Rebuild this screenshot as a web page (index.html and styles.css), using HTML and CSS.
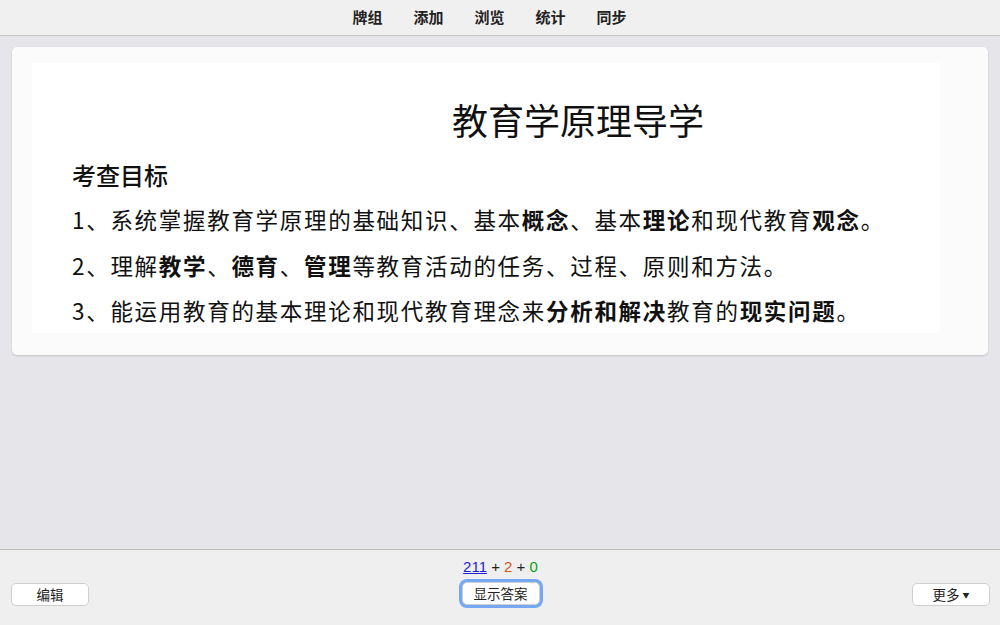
FILE: index.html
```html
<!DOCTYPE html>
<html lang="zh-CN">
<head>
<meta charset="UTF-8">
<meta name="viewport" content="width=device-width, initial-scale=1.0">
<link rel="stylesheet" href="styles.css">
<title>Anki</title>
</head>
<body>

<div class="topbar">
    <a class="nav-item">牌组</a>
    <a class="nav-item">添加</a>
    <a class="nav-item">浏览</a>
    <a class="nav-item">统计</a>
    <a class="nav-item">同步</a>
</div>

<div class="main">
    <div class="card">
        <div class="slide">
            <div class="slide-title">教育学原理导学</div>
            <div class="slide-heading">考查目标</div>
            <div class="slide-line">1、系统掌握教育学原理的基础知识、基本<b>概念</b>、基本<b>理论</b>和现代教育<b>观念</b>。</div>
            <div class="slide-line">2、理解<b>教学</b>、<b>德育</b>、<b>管理</b>等教育活动的任务、过程、原则和方法。</div>
            <div class="slide-line">3、能运用教育的基本理论和现代教育理念来<b>分析和解决</b>教育的<b>现实问题</b>。</div>
        </div>
    </div>
</div>

<div class="bottombar">
    <button class="btn side-btn">编辑</button>
    <div class="center-col">
        <div class="counts">
            <a class="count-new">211</a> + <span class="count-learn">2</span> + <span class="count-review">0</span>
        </div>
        <button class="btn answer-btn">显示答案</button>
    </div>
    <button class="btn side-btn">更多 <span class="caret">&#9660;</span></button>
</div>

</body>
</html>
```

FILE: styles.css
```css
body {
    margin: 0;
    height: 625px;
    display: flex;
    flex-direction: column;
    font-family: "Liberation Sans", "Noto Sans CJK SC", sans-serif;
    background-color: #e6e6ea;
    overflow: hidden;
}

.topbar {
    height: 36px;
    box-sizing: border-box;
    flex: none;
    display: flex;
    justify-content: center;
    align-items: center;
    gap: 31px;
    padding: 0 21px 3px 0;
    background-color: #f0f0f0;
    border-bottom: 1px solid #c4c4c4;
}

.nav-item {
    font-size: 15px;
    font-weight: bold;
    color: #222;
    font-family: "Noto Sans CJK SC", sans-serif;
}

.main {
    flex: 1;
    padding: 11px 12px;
}

.card {
    background-color: #fbfbfb;
    border-radius: 5px;
    box-shadow: 0 1px 2px rgba(0,0,0,0.15);
    padding: 16px 48px 22px 20px;
}

.slide {
    background-color: #ffffff;
    height: 270px;
    padding-left: 40px;
    box-sizing: border-box;
    font-family: "Noto Sans CJK SC", sans-serif;
    color: #111;
}

.slide-title {
    font-size: 36px;
    line-height: 40px;
    padding-top: 36px;
    padding-left: 380px;
}

.slide-heading {
    font-size: 24px;
    font-weight: 500;
    line-height: 30px;
    margin-top: 21px;
}

.slide-line {
    font-size: 22.5px;
    line-height: 45.5px;
    letter-spacing: 1.7px;
}

.slide-heading + .slide-line {
    margin-top: 7px;
}

.slide-line b {
    font-weight: bold;
}

.bottombar {
    height: 76px;
    flex: none;
    box-sizing: border-box;
    display: flex;
    justify-content: space-between;
    align-items: flex-end;
    padding: 0 10px 19px 11px;
    background-color: #efefef;
    border-top: 1px solid #bdbdbd;
}

.center-col {
    display: flex;
    flex-direction: column;
    align-items: center;
    gap: 7px;
}

.counts {
    font-size: 15px;
    color: #222;
}

.count-new {
    color: #1f1fd0;
    text-decoration: underline;
}

.count-learn {
    color: #d2551a;
}

.count-review {
    color: #10a010;
}

.btn {
    font-family: "Noto Sans CJK SC", sans-serif;
    font-size: 13.5px;
    color: #222;
    background-color: #ffffff;
    border: 1px solid #cfcfcf;
    border-radius: 5px;
    height: 23px;
    padding: 0;
    line-height: 21px;
}

.side-btn {
    width: 78px;
}

.answer-btn {
    width: 78px;
    margin-bottom: 1px;
    box-shadow: 0 0 0 3px #74a8f5;
}

.caret {
    font-size: 7px;
    vertical-align: 2px;
}
```
